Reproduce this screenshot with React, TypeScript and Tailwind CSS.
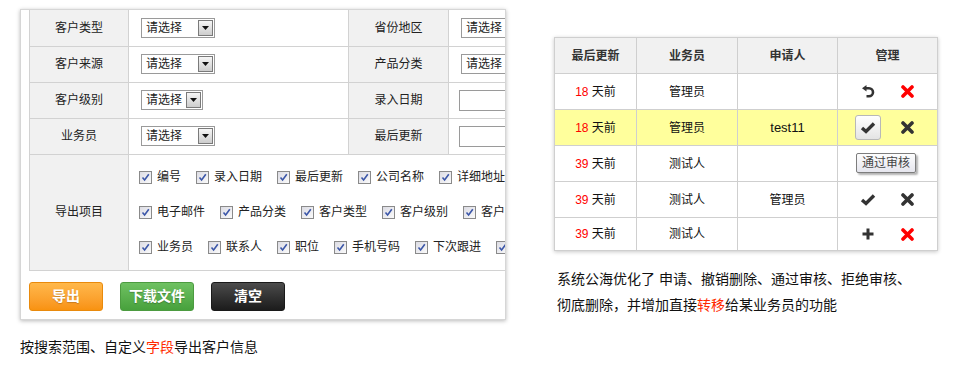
import React from 'react';

const font = "font-['Liberation_Sans','Noto_Sans_CJK_SC',sans-serif]";

const Select = ({ w = 'w-[74px]' }: { w?: string }) => (
  <div className={`flex h-[20px] ${w} items-center border border-[#9a9a9a] bg-white`}>
    <span className="flex-1 pl-[4px] text-[12px] leading-none text-[#222]">请选择</span>
    <span className="mr-px flex h-[16px] w-[15px] items-center justify-center border border-[#7a7a7a] bg-gradient-to-b from-[#f6f6f6] to-[#cdcdcd]">
      <svg width="7" height="4" viewBox="0 0 7 4">
        <path d="M0 0h7L3.5 4z" fill="#111" />
      </svg>
    </span>
  </div>
);

const Check = ({ label }: { label: string }) => (
  <span className="mr-[15px] flex shrink-0 items-center gap-[5px]">
    <span className="flex h-[13px] w-[13px] items-center justify-center border border-[#8a8a8a] bg-gradient-to-br from-[#dcdce4] to-[#fafafa]">
      <svg width="9" height="9" viewBox="0 0 9 9">
        <path d="M1.5 4.5 L3.6 7 L7.8 1.2" stroke="#3b56a8" strokeWidth="1.6" fill="none" />
      </svg>
    </span>
    <span className="whitespace-nowrap text-[12px] leading-none text-[#222]">{label}</span>
  </span>
);

const rows1 = ['编号', '录入日期', '最后更新', '公司名称', '详细地址', '联系电话'];
const rows2 = ['电子邮件', '产品分类', '客户类型', '客户级别', '客户来源', '省份地区'];
const rows3 = ['业务员', '联系人', '职位', '手机号码', '下次跟进', '备注'];

const lbl = 'border border-[#d2d2d2] bg-[#f1f1f1] text-center text-[12px] text-[#222]';
const val = 'border border-[#d2d2d2] bg-white';

const UndoIcon = () => (
  <svg width="14" height="13" viewBox="0 0 14 13">
    <path d="M4.5 3.2 H8 A4 4 0 0 1 8 11.2 H5.5" stroke="#333" strokeWidth="2.6" fill="none" />
    <path d="M1 3.2 L5.5 0 L5.5 6.6 Z" fill="#333" />
  </svg>
);

const XIcon = ({ color }: { color: string }) => (
  <svg width="15" height="13" viewBox="0 0 15 13">
    <path d="M3 2 L12 11 M12 2 L3 11" stroke={color} strokeWidth="3.6" strokeLinecap="round" />
  </svg>
);

const CheckIcon = () => (
  <svg width="16" height="13" viewBox="0 0 16 13">
    <path d="M2 7 L6 10.5 L14 2.5" stroke="#333" strokeWidth="3.4" fill="none" strokeLinejoin="miter" />
  </svg>
);

const PlusIcon = () => (
  <svg width="14" height="14" viewBox="0 0 14 14">
    <path d="M7 1.5 V12.5 M1.5 7 H12.5" stroke="#333" strokeWidth="3" />
  </svg>
);

const Box = ({ children }: { children?: React.ReactNode }) => (
  <span className="flex h-[25px] w-[26px] items-center justify-center">{children}</span>
);

const Days = ({ n }: { n: string }) => (
  <span>
    <span className="text-[#ff0000]">{n}</span> 天前
  </span>
);

const td = 'border border-[#cfcfcf] text-center text-[12px] text-[#111]';

export default function App() {
  return (
    <div className={`flex h-[374px] w-[960px] items-start bg-white ${font}`}>
      {/* left: export panel */}
      <div className="ml-[20px] w-[486px]">
        <div className="mt-[9px] h-[311px] overflow-hidden border border-[#d6d6d6] bg-white pl-[8px] shadow-[0_1px_4px_rgba(0,0,0,0.28)]">
          <table className="w-[519px] table-fixed">
            <colgroup>
              <col className="w-[99px]" />
              <col className="w-[220px]" />
              <col className="w-[100px]" />
              <col className="w-[100px]" />
            </colgroup>
            <tbody>
              <tr className="h-[36px]">
                <td className={`${lbl} border-t-0`}>客户类型</td>
                <td className={`${val} border-t-0 pl-[12px]`}><Select /></td>
                <td className={`${lbl} border-t-0`}>省份地区</td>
                <td className={`${val} border-t-0 pl-[12px]`}><Select /></td>
              </tr>
              <tr className="h-[36px]">
                <td className={lbl}>客户来源</td>
                <td className={`${val} pl-[12px]`}><Select /></td>
                <td className={lbl}>产品分类</td>
                <td className={`${val} pl-[12px]`}><Select /></td>
              </tr>
              <tr className="h-[36px]">
                <td className={lbl}>客户级别</td>
                <td className={`${val} pl-[12px]`}><Select w="w-[62px]" /></td>
                <td className={lbl}>录入日期</td>
                <td className={`${val} pl-[10px]`}><div className="h-[21px] w-[80px] border border-[#9a9a9a] bg-white" /></td>
              </tr>
              <tr className="h-[36px]">
                <td className={lbl}>业务员</td>
                <td className={`${val} pl-[12px]`}><Select /></td>
                <td className={lbl}>最后更新</td>
                <td className={`${val} pl-[10px]`}><div className="h-[21px] w-[80px] border border-[#9a9a9a] bg-white" /></td>
              </tr>
              <tr className="h-[116px]">
                <td className={lbl}>导出项目</td>
                <td colSpan={3} className={`${val} pl-[10px]`}>
                  <div className="flex flex-col gap-[17px] overflow-hidden">
                    {[rows1, rows2, rows3].map((r, i) => (
                      <div key={i} className="flex h-[18px] items-center">
                        {r.map((l) => <Check key={l} label={l} />)}
                      </div>
                    ))}
                  </div>
                </td>
              </tr>
            </tbody>
          </table>
          <div className="mt-[11px] flex gap-[17px]">
            <button className="h-[29px] w-[74px] rounded-[3px] border border-[#e98a0c] bg-gradient-to-b from-[#ffb84a] to-[#f8920f] text-[14px] font-bold text-white [text-shadow:0_1px_1px_rgba(0,0,0,0.2)]">导出</button>
            <button className="h-[29px] w-[74px] rounded-[3px] border border-[#4c9b40] bg-gradient-to-b from-[#6fc162] to-[#47a13c] text-[14px] font-bold text-white [text-shadow:0_1px_1px_rgba(0,0,0,0.25)]">下载文件</button>
            <button className="h-[29px] w-[74px] rounded-[3px] border border-[#1a1a1a] bg-gradient-to-b from-[#4c4c4c] to-[#1c1c1c] text-[14px] font-bold text-white">清空</button>
          </div>
        </div>
        <p className="mt-[17px] text-[14px] leading-[20px] text-[#111]">
          按搜索范围、自定义<span className="text-[#ff2a00]">字段</span>导出客户信息
        </p>
      </div>

      {/* right: sea table */}
      <div className="ml-[48px] mt-[37px] w-[383px]">
        <table className="w-[383px] table-fixed shadow-[0_1px_4px_rgba(0,0,0,0.22)]">
          <colgroup>
            <col className="w-[82px]" />
            <col className="w-[101px]" />
            <col className="w-[100px]" />
            <col className="w-[100px]" />
          </colgroup>
          <thead>
            <tr className="h-[36px] bg-[#f1f1f1]">
              <th className={`${td} font-bold text-[#333]`}>最后更新</th>
              <th className={`${td} font-bold text-[#333]`}>业务员</th>
              <th className={`${td} font-bold text-[#333]`}>申请人</th>
              <th className={`${td} font-bold text-[#333]`}>管理</th>
            </tr>
          </thead>
          <tbody>
            <tr className="h-[36px] bg-white">
              <td className={td}><Days n="18" /></td>
              <td className={td}>管理员</td>
              <td className={td}></td>
              <td className={td}>
                <div className="flex justify-center gap-[13px]"><Box><UndoIcon /></Box><Box><XIcon color="#ff0000" /></Box></div>
              </td>
            </tr>
            <tr className="h-[36px] bg-[#ffff9c]">
              <td className={td}><Days n="18" /></td>
              <td className={td}>管理员</td>
              <td className={`${td} text-[13px]`}>test11</td>
              <td className={td}>
                <div className="flex justify-center gap-[13px]">
                  <Box>
                    <span className="flex h-[25px] w-[26px] items-center justify-center rounded-[3px] border border-[#b8b8b8] bg-gradient-to-b from-[#ffffff] to-[#e4e4e4]"><CheckIcon /></span>
                  </Box>
                  <Box><XIcon color="#333" /></Box>
                </div>
              </td>
            </tr>
            <tr className="h-[36px] bg-white">
              <td className={td}><Days n="39" /></td>
              <td className={td}>测试人</td>
              <td className={td}></td>
              <td className={`${td} relative`}>
                <span className="absolute left-[18px] top-[7px] flex h-[20px] w-[60px] items-center justify-center rounded-[2px] border border-[#7d7d7d] bg-gradient-to-b from-[#fdfdfd] to-[#e6e6ee] text-[12px] text-[#444] shadow-[2px_2px_2px_rgba(0,0,0,0.3)]">通过审核</span>
              </td>
            </tr>
            <tr className="h-[36px] bg-white">
              <td className={td}><Days n="39" /></td>
              <td className={td}>测试人</td>
              <td className={td}>管理员</td>
              <td className={td}>
                <div className="flex justify-center gap-[13px]"><Box><CheckIcon /></Box><Box><XIcon color="#333" /></Box></div>
              </td>
            </tr>
            <tr className="h-[33px] bg-white">
              <td className={td}><Days n="39" /></td>
              <td className={td}>测试人</td>
              <td className={td}></td>
              <td className={td}>
                <div className="flex justify-center gap-[13px]"><Box><PlusIcon /></Box><Box><XIcon color="#ff0000" /></Box></div>
              </td>
            </tr>
          </tbody>
        </table>
        <p className="ml-[3px] mt-[15px] text-[14px] leading-[26px] text-[#111]">
          系统公海优化了 申请、撤销删除、通过审核、拒绝审核、<br />
          彻底删除，并增加直接<span className="text-[#ff2a00]">转移</span>给某业务员的功能
        </p>
      </div>
    </div>
  );
}
